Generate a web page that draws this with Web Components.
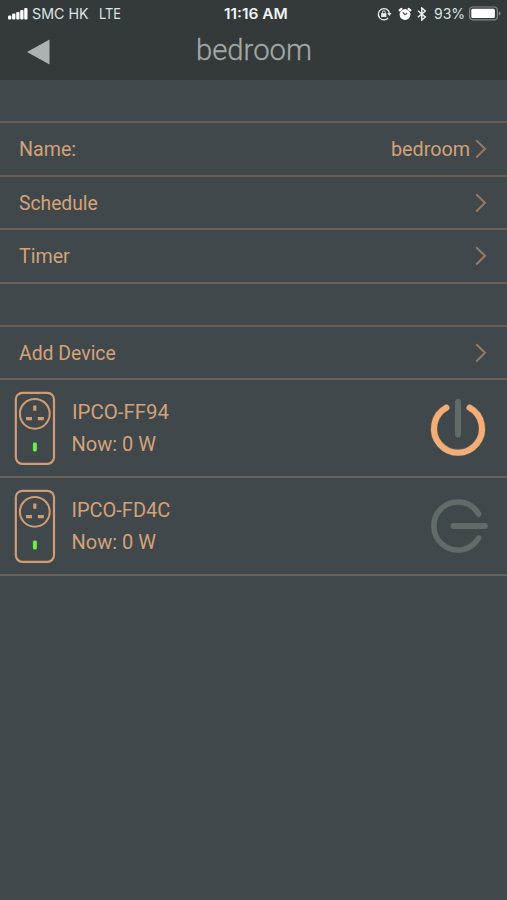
<!DOCTYPE html>
<html lang="en">
<head>
<meta charset="utf-8">
<title>bedroom</title>
<style>
html,body{margin:0;background:#40484b}
body{width:507px;height:900px;overflow:hidden}
</style>
</head>
<body>
<room-screen></room-screen>
<script>
function define(name, html, setup){
  customElements.define(name, class extends HTMLElement{
    connectedCallback(){
      if(this.shadowRoot) return;
      this.attachShadow({mode:'open'}).innerHTML = typeof html === 'function' ? html(this) : html;
      if(setup) setup(this);
    }
  });
}

// Single line of text condensed or widened to a given width.
define('fit-text', el => `<style>
:host{display:block;flex:none;width:${el.getAttribute('w')}px;white-space:nowrap}
span{display:inline-block;transform-origin:0 50%}
</style><span>${el.getAttribute('text')}</span>`, el => {
  const s = el.shadowRoot.querySelector('span');
  s.style.transform = `scaleX(${Number(el.getAttribute('w')) / s.offsetWidth})`;
});

define('status-bar', `<style>
:host{display:grid;grid-template-columns:216px 64px 1fr;align-items:center;height:27px;box-sizing:border-box;padding:0 6px 0 8px;font:400 14px/27px Inter,sans-serif;color:#dfe3e3}
div{display:flex;align-items:center}
.r{justify-content:flex-end}
svg{display:block;flex:none}
.time{font-weight:600;color:#f2f4f4}
</style>
<div>
<svg width="20" height="14" viewBox="0 0 20 14" fill="#fff"><rect y="8.5" width="3.3" height="4" rx="1"/><rect x="4.1" y="6.6" width="3.3" height="5.9" rx="1"/><rect x="8.2" y="5" width="3.3" height="7.5" rx="1"/><rect x="12.2" y="3" width="3.3" height="9.5" rx="1"/><rect x="16.2" y="1" width="3.3" height="11.5" rx="1"/></svg>
<fit-text w="57" text="SMC HK" style="margin-left:4px"></fit-text>
<fit-text w="22" text="LTE" style="margin-left:10px"></fit-text>
</div>
<fit-text class="time" w="64" text="11:16 AM"></fit-text>
<div class="r">
<svg width="15" height="14" viewBox="0 0 15 14" fill="none" stroke="#e8ebeb" stroke-width="1.3"><path d="M11.2 10.8A5.6 5.6 0 1 1 12.4 6"/><path d="M10.2 6h4.4l-2.2 3z" fill="#e8ebeb" stroke="none"/><rect x="4.2" y="6.2" width="5.2" height="3.8" fill="#e8ebeb" stroke="none"/><path d="M5.4 6.4V5.2a1.4 1.4 0 0 1 2.8 0v1.2" stroke-width="1"/></svg>
<svg style="margin-left:6px" width="14" height="14" viewBox="0 0 14 14"><circle cx="7" cy="7.5" r="5.4" fill="#fff"/><path d="M1.6 3.4 3.4 1.8M12.4 3.4 10.6 1.8" stroke="#fff" stroke-width="2.1" stroke-linecap="round"/><path d="M4.8 5.3 7 7.6l2.2-1.4" fill="none" stroke="#343b3a" stroke-width="1.1"/></svg>
<svg style="margin-left:5px" width="10" height="14" viewBox="0 0 10 14" fill="none" stroke="#eef0f0" stroke-width="1.5"><path d="M1 3.8 8.3 10 4.8 13V1l3.5 3L1 10.2"/></svg>
<fit-text w="31" text="93%" style="margin-left:7px"></fit-text>
<svg style="margin-left:4px" width="32" height="15" viewBox="0 0 32 15"><rect x=".6" y="1" width="27.8" height="12.8" rx="3.2" fill="none" stroke="#838a89" stroke-width="1.2"/><rect x="2.3" y="2.7" width="23.6" height="9.4" rx="1.5" fill="#fff"/><path d="M29.8 5.4q1.8 .4 1.8 2t-1.8 2z" fill="#838a89"/></svg>
</div>`);

define('nav-bar', `<style>
:host{display:grid;grid-template-columns:50px 1fr 50px;align-items:center;height:53px;box-sizing:border-box;padding:0 0 7px;font:300 29px/46px Roboto,sans-serif;color:#a3a8a8;-webkit-text-stroke:.3px #a3a8a8}
svg{display:block;justify-self:end;margin-top:3px}
fit-text{justify-self:center}
</style>
<svg width="23" height="26" viewBox="0 0 23 26"><path d="M0 13 22.5 .6v24.8z" fill="#abb2b1"/></svg>
<fit-text w="116" text="bedroom"></fit-text><i></i>`);

define('chevron-icon', `<style>:host{display:block;flex:none}svg{display:block}</style>
<svg width="12" height="20" viewBox="0 0 12 20" fill="none" stroke="#967963" stroke-width="2"><path d="m1.2 1.2 8.8 8.6-8.8 8.7"/></svg>`);

define('menu-row', `<style>
:host{display:flex;align-items:center;box-sizing:border-box;border-bottom:2px solid #685f56;padding:0 20px 0 19px;font:400 20px/24px Roboto,sans-serif;color:#d3a279}
.gap{flex:1}chevron-icon{margin-left:5px}
</style><slot></slot><span class="gap"></span><slot name="value"></slot><chevron-icon></chevron-icon>`);

define('plug-icon', `<style>:host{display:block;flex:none}svg{display:block}</style>
<svg width="42" height="74" viewBox="0 0 42 74" fill="none" stroke="#d09c75"><rect x="1.8" y="1.8" width="38.2" height="71" rx="6.5" stroke-width="2.2"/><circle cx="20.8" cy="22.8" r="14.9" stroke-width="2"/><path d="M20.8 14.4v5.4M12 27.6h6M23.8 27.6h6" stroke-width="3.2"/><rect x="18.9" y="51.5" width="4" height="9" rx="1.4" fill="#6bee4b" stroke="none"/></svg>`);

define('power-icon', el => `<style>:host{display:block;flex:none}svg{display:block;overflow:visible}</style>
<svg width="58" height="58" viewBox="0 0 58 58" fill="none" stroke-linecap="round">${
 el.hasAttribute('on')
 ? '<path d="M17 8.7A24 24 0 1 0 41 8.7" stroke="#c58f66" stroke-width="7.4" opacity=".25"/><path d="M17.4 8.7A24 24 0 1 0 40.6 8.7" stroke="#f3ae78" stroke-width="6"/><path d="M29 3v32.5" stroke="#606b6a" stroke-width="6"/>'
 : '<path d="M49.6 17A24 24 0 1 0 49.6 41" stroke="#606b6a" stroke-width="5.6"/><path d="M24.5 29H56" stroke="#606b6a" stroke-width="5.8"/>'}</svg>`);

define('device-row', el => `<style>
:host{display:flex;align-items:center;box-sizing:border-box;border-bottom:2px solid #685f56;padding:0 20px 0 14px;height:98px;font:400 20px/32px Roboto,sans-serif;color:#d3a279}
.info{flex:1;margin-left:15.5px}
</style><plug-icon></plug-icon><div class="info"><slot></slot></div><power-icon ${el.hasAttribute('on')?'on':''}></power-icon>`);

define('room-screen', `<style>
:host{display:flex;flex-direction:column;width:507px;height:900px;background:#40484b}
header{background:#333a39;height:80px}
section{border-top:2px solid #685f56;margin-top:41px}
menu-row{height:54px}
.low{height:53px}
</style>
<header><status-bar></status-bar><nav-bar></nav-bar></header>
<section>
<menu-row><fit-text w="57" text="Name:"></fit-text><fit-text slot="value" w="79" text="bedroom"></fit-text></menu-row>
<menu-row class="low"><fit-text w="79" text="Schedule"></fit-text></menu-row>
<menu-row><fit-text w="51" text="Timer"></fit-text></menu-row>
</section>
<section>
<menu-row class="low"><fit-text w="97" text="Add Device"></fit-text></menu-row>
<device-row on><fit-text w="97" text="IPCO-FF94"></fit-text><fit-text w="84" text="Now: 0 W"></fit-text></device-row>
<device-row><fit-text w="99" text="IPCO-FD4C"></fit-text><fit-text w="84" text="Now: 0 W"></fit-text></device-row>
</section>`);
</script>
</body>
</html>
